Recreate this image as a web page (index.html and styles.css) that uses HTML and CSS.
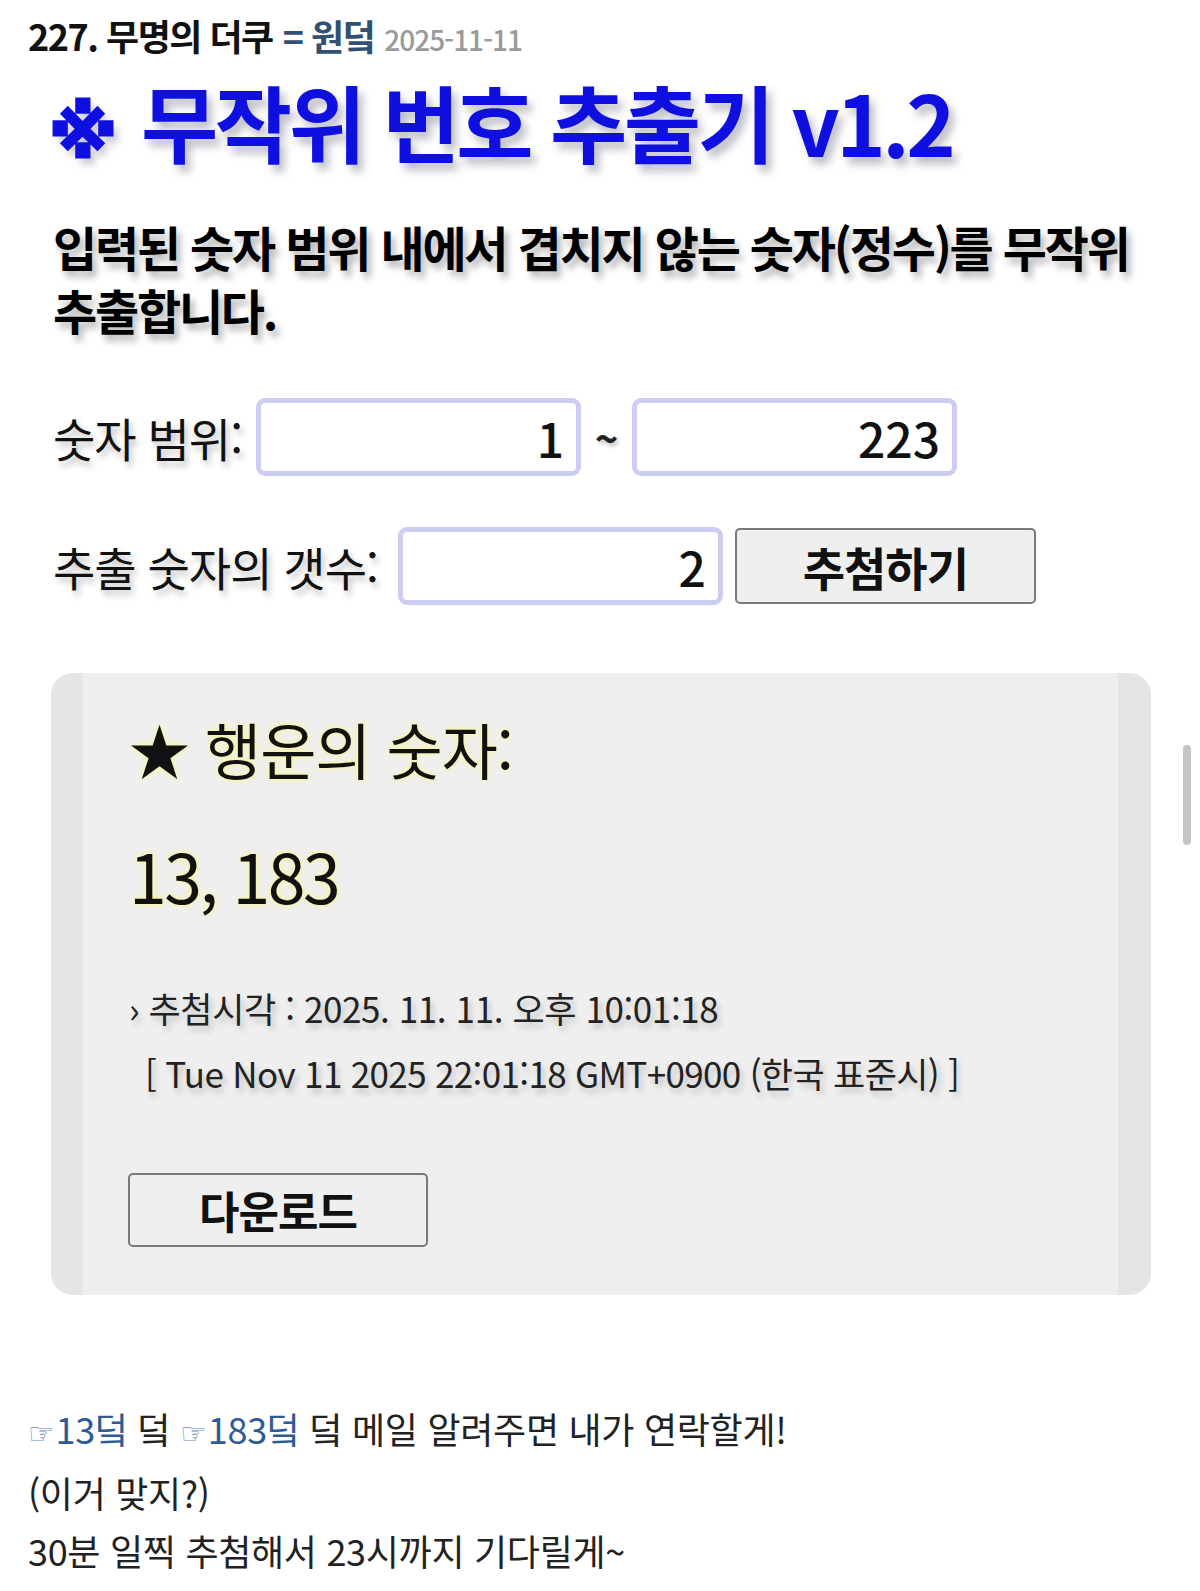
FILE: index.html
```html
<!DOCTYPE html>
<html lang="ko">
<head>
<meta charset="utf-8">
<title>무작위 번호 추출기</title>
<link rel="stylesheet" href="styles.css">
</head>
<body>
<div class="page">
  <div class="post-head">
    <span class="post-no">227. 무명의 더쿠</span>
    <span class="post-user">= 원덬</span>
    <span class="post-date">2025-11-11</span>
  </div>

  <div class="widget">
    <h1 class="title"><span class="mark">※</span> 무작위 번호 추출기 v1.2</h1>
    <p class="desc">입력된 숫자 범위 내에서 겹치지 않는 숫자(정수)를 무작위 추출합니다.</p>

    <div class="form-row row-range">
      <span class="label">숫자 범위:</span>
      <input class="num-input" type="text" value="1">
      <span class="tilde">~</span>
      <input class="num-input" type="text" value="223">
    </div>

    <div class="form-row row-count">
      <span class="label">추출 숫자의 갯수:</span>
      <input class="num-input" type="text" value="2">
      <button class="btn btn-draw" type="button">추첨하기</button>
    </div>

    <div class="result">
      <div class="lucky-head">★ 행운의 숫자:</div>
      <div class="lucky-nums">13, 183</div>
      <div class="draw-time">› 추첨시각 : 2025. 11. 11. 오후 10:01:18</div>
      <div class="draw-raw">[ Tue Nov 11 2025 22:01:18 GMT+0900 (한국 표준시) ]</div>
      <button class="btn btn-down" type="button">다운로드</button>
    </div>
  </div>

  <div class="comment">
    <p><span class="ref"><span class="hand">☞</span>13덬</span> 덬 <span class="ref"><span class="hand">☞</span>183덬</span> 덬 메일 알려주면 내가 연락할게!</p>
    <p>(이거 맞지?)</p>
    <p>30분 일찍 추첨해서 23시까지 기다릴게~</p>
  </div>
</div>
<div class="scroll-thumb"></div>
</body>
</html>
```

FILE: styles.css
```css
html, body {
  margin: 0;
  padding: 0;
  background: #ffffff;
}

body {
  font-family: "Noto Sans CJK KR", "Noto Sans", sans-serif;
  color: #111;
  width: 1200px;
  height: 1591px;
  overflow: hidden;
}

.page {
  padding: 10px 0 0 28px;
}

.post-head {
  display: flex;
  align-items: baseline;
  gap: 10px;
  height: 50px;
  line-height: 50px;
}

.post-no {
  font-size: 36px;
  font-weight: 700;
  letter-spacing: -1.5px;
  color: #111;
}

.post-user {
  font-size: 36px;
  font-weight: 700;
  letter-spacing: -1.5px;
  color: #32506f;
}

.post-date {
  font-size: 28px;
  font-weight: 500;
  letter-spacing: -1px;
  color: #9a9a9a;
}

.widget {
  padding-left: 25px;
}

.title {
  margin: 11px 0 0 -4px;
  font-size: 84px;
  line-height: 100px;
  font-weight: 700;
  letter-spacing: -3.5px;
  color: #0f0fe0;
  text-shadow: 5px 7px 8px rgba(60, 60, 90, 0.35);
  white-space: nowrap;
}

.mark {
  font-family: "DejaVu Sans", "Noto Sans CJK KR", sans-serif;
  font-size: 70px;
  font-weight: 700;
  -webkit-text-stroke: 3px #0f0fe0;
  letter-spacing: 0;
  margin-right: 4px;
}

.desc {
  margin: 32px 0 0 0;
  width: 1098px;
  font-size: 48px;
  line-height: 63px;
  font-weight: 700;
  letter-spacing: -2.2px;
  color: #000;
  word-break: keep-all;
  text-shadow: 4px 6px 7px rgba(0, 0, 0, 0.3);
}

.form-row {
  display: flex;
  align-items: center;
  height: 80px;
}

.row-range {
  margin-top: 56px;
}

.row-count {
  margin-top: 49px;
}

.label {
  font-size: 46px;
  letter-spacing: -1px;
  color: #111;
  margin-right: 14px;
  text-shadow: 3px 5px 6px rgba(0, 0, 0, 0.25);
}

.row-count .label {
  margin-right: 20px;
}

.num-input {
  box-sizing: border-box;
  width: 325px;
  height: 78px;
  margin: 0;
  padding: 0 12px 0 8px;
  border: 5px solid #cdcdf4;
  border-radius: 9px;
  background: #fff;
  outline: none;
  text-align: right;
  font-family: "Noto Sans CJK KR", "Noto Sans", sans-serif;
  font-size: 48px;
  font-weight: 500;
  color: #111;
}

.tilde {
  width: 51px;
  text-align: center;
  font-size: 40px;
  font-weight: 700;
  color: #222;
  text-shadow: 2px 3px 4px rgba(0, 0, 0, 0.25);
}

.btn {
  box-sizing: border-box;
  margin: 0;
  padding: 0;
  background: #efefef;
  border: 2px solid #7a7a7a;
  border-radius: 5px;
  font-family: "Noto Sans CJK KR", "Noto Sans", sans-serif;
  font-weight: 700;
  color: #111;
  letter-spacing: -1px;
}

.btn-draw {
  width: 301px;
  height: 76px;
  margin-left: 12px;
  font-size: 46px;
}

.result {
  box-sizing: border-box;
  margin: 67px 0 0 -2px;
  width: 1100px;
  height: 622px;
  padding: 26px 0 0 46px;
  background: #efefef;
  border-left: 32px solid #e5e5e5;
  border-right: 33px solid #e5e5e5;
  border-radius: 22px;
}

.lucky-head {
  font-size: 61px;
  line-height: 100px;
  color: #111;
  letter-spacing: -1px;
  text-shadow: 0 0 6px #fbf59a, 0 0 3px #fbf59a;
}

.lucky-nums {
  margin-top: 26px;
  font-size: 68px;
  line-height: 100px;
  letter-spacing: -2.5px;
  color: #111;
  text-shadow: 0 0 6px #fbf59a, 0 0 3px #fbf59a;
}

.draw-time {
  margin-top: 50px;
  font-size: 35px;
  line-height: 65px;
  letter-spacing: -0.4px;
  color: #222;
  text-shadow: 3px 5px 6px rgba(0, 0, 0, 0.2);
}

.draw-raw {
  padding-left: 16px;
  font-size: 35px;
  line-height: 65px;
  letter-spacing: -0.65px;
  color: #222;
  text-shadow: 3px 5px 6px rgba(0, 0, 0, 0.2);
}

.btn-down {
  display: block;
  width: 300px;
  height: 74px;
  margin: 68px 0 0 -1px;
  font-size: 44px;
}

.comment {
  margin-top: 104px;
}

.comment p {
  margin: 0;
  font-size: 36px;
  line-height: 58px;
  letter-spacing: -0.3px;
  color: #222;
}

.ref {
  color: #2d5b95;
}

.hand {
  font-family: "DejaVu Sans", sans-serif;
  font-size: 30px;
  color: #6a8dc0;
  margin-right: 1px;
}

.scroll-thumb {
  position: fixed;
  left: 1183px;
  top: 745px;
  width: 8px;
  height: 100px;
  border-radius: 4px;
  background: #c4c4c4;
}
```
